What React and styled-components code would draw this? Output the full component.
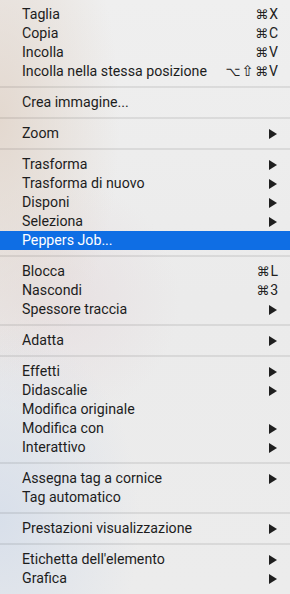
import React from "react";
import styled, { createGlobalStyle } from "styled-components";

const Global = createGlobalStyle`
  html, body { margin: 0; padding: 0; }
  body { width: 290px; height: 594px; overflow: hidden; }
`;

const Menu = styled.div`
  width: 290px;
  height: 594px;
  box-sizing: border-box;
  padding: 5px 0 6px;
  display: flex;
  flex-direction: column;
  font-family: Roboto, "Liberation Sans", sans-serif;
  font-size: 14.2px;
  color: #1d1d1d;
  background:
    radial-gradient(ellipse 120px 260px at 0px 120px, rgba(226, 214, 204, 0.9), rgba(226, 214, 204, 0) 100%),
    radial-gradient(ellipse 140px 200px at 0px 520px, rgba(214, 222, 234, 0.9), rgba(214, 222, 234, 0) 100%),
    radial-gradient(ellipse 120px 120px at 60px 300px, rgba(230, 220, 222, 0.7), rgba(230, 220, 222, 0) 100%),
    linear-gradient(180deg, #efefef 0%, #ebebeb 50%, #ececec 100%);
`;

const Item = styled.div`
  height: 19px;
  flex: 0 0 19px;
  display: flex;
  align-items: center;
  justify-content: space-between;
  padding: 0 12px 0 22px;
  background: ${(p) => (p.$active ? "#0f6ee4" : "transparent")};
  color: ${(p) => (p.$active ? "#ffffff" : "inherit")};
  white-space: nowrap;
`;

const Label = styled.span`
  line-height: 19px;
`;

const Shortcut = styled.span`
  display: flex;
  align-items: center;
  gap: 1px;
  line-height: 19px;
  color: #222;
`;

const Sym = styled.span`
  font-family: "DejaVu Sans", sans-serif;
  font-size: ${(p) => p.$size || 13}px;
`;

const Key = styled.span`
  font-size: 14px;
`;

const Separator = styled.div`
  flex: 0 0 12px;
  height: 12px;
  display: flex;
  align-items: center;
  &::after {
    content: "";
    display: block;
    width: 100%;
    height: 2px;
    background: rgba(0, 0, 0, 0.08);
  }
`;

const Arrow = () => (
  <svg width="8" height="10" viewBox="0 0 8 10" style={{ display: "block", marginRight: 1 }}>
    <polygon points="0,0 8,5 0,10" fill="#1f1f1f" />
  </svg>
);

const renderShortcut = (s) => {
  const chars = Array.from(s);
  return (
    <Shortcut>
      {chars.map((c, i) =>
        /[A-Z0-9]/.test(c) ? (
          <Key key={i}>{c}</Key>
        ) : (
          <Sym key={i} $size={c === "⇧" ? 15 : 13}>
            {c}
          </Sym>
        )
      )}
    </Shortcut>
  );
};

const groups = [
  [
    ["Taglia", "⌘X"],
    ["Copia", "⌘C"],
    ["Incolla", "⌘V"],
    ["Incolla nella stessa posizione", "⌥⇧⌘V"],
  ],
  [["Crea immagine..."]],
  [["Zoom", ">"]],
  [
    ["Trasforma", ">"],
    ["Trasforma di nuovo", ">"],
    ["Disponi", ">"],
    ["Seleziona", ">"],
    ["Peppers Job...", null, true],
  ],
  [
    ["Blocca", "⌘L"],
    ["Nascondi", "⌘3"],
    ["Spessore traccia", ">"],
  ],
  [["Adatta", ">"]],
  [
    ["Effetti", ">"],
    ["Didascalie", ">"],
    ["Modifica originale"],
    ["Modifica con", ">"],
    ["Interattivo", ">"],
  ],
  [
    ["Assegna tag a cornice", ">"],
    ["Tag automatico"],
  ],
  [["Prestazioni visualizzazione", ">"]],
  [
    ["Etichetta dell'elemento", ">"],
    ["Grafica", ">"],
  ],
];

export default function App() {
  return (
    <>
      <Global />
      <Menu>
        {groups.map((g, gi) => (
          <React.Fragment key={gi}>
            {gi > 0 && <Separator />}
            {g.map(([label, right, active]) => (
              <Item key={label} $active={active}>
                <Label>{label}</Label>
                {right === ">" ? <Arrow /> : right ? renderShortcut(right) : null}
              </Item>
            ))}
          </React.Fragment>
        ))}
      </Menu>
    </>
  );
}
